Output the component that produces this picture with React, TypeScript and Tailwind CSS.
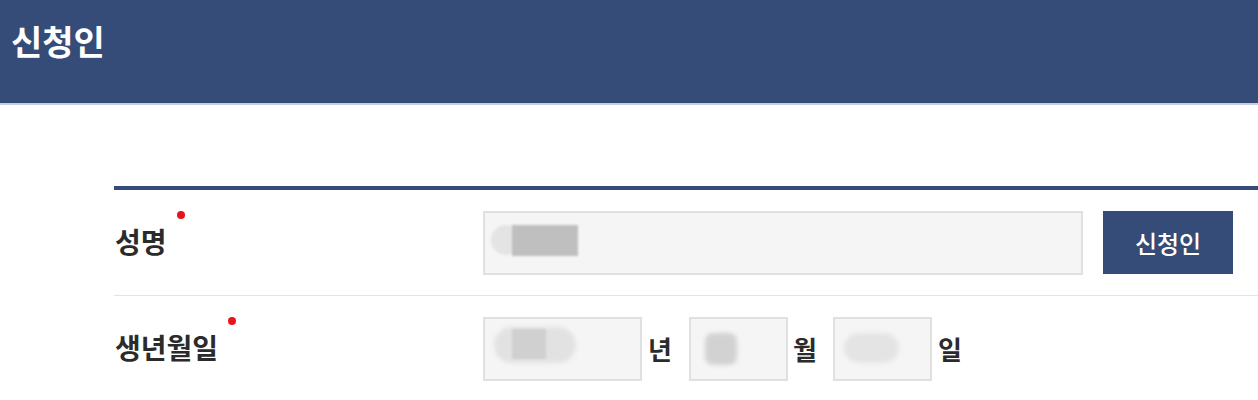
import React from "react";

const font = { fontFamily: '"Noto Sans CJK KR", "Noto Sans", sans-serif' };

function Dot() {
  return <span className="absolute -right-[18px] -top-[10px] w-[8px] h-[8px] rounded-full bg-[#e8141b]" />;
}

export default function App() {
  return (
    <div className="w-[1258px] h-[400px] bg-white overflow-hidden" style={font}>
      <header className="h-[105px] bg-[#344c77] border-b-2 border-[#c6cedd] pl-[11px] pt-[16px]">
        <h1 className="text-[34px] font-bold text-white leading-[50px]">신청인</h1>
      </header>

      <div className="ml-[114px] mt-[81px] border-t-[4px] border-[#344c77]">
        {/* Row 1 */}
        <div className="h-[106px] border-b border-[#e3e3e3] flex items-center">
          <div className="w-[369px] pl-[1px]">
            <span className="relative text-[28px] font-bold text-[#2b2b2b] leading-none">
              성명
              <Dot />
            </span>
          </div>
          <div className="relative w-[600px] h-[64px] bg-[#f5f5f5] border-2 border-[#e0e0e0] overflow-hidden">
            <div className="absolute left-[6px] top-[12px] w-[30px] h-[30px] rounded-full bg-[#e4e4e4] blur-[1px]" />
            <div className="absolute left-[27px] top-[12px] w-[66px] h-[31px] bg-[#bfbfbf] blur-[1px]" />
          </div>
          <button className="ml-[20px] w-[130px] h-[63px] bg-[#344c77] text-white text-[24px] font-medium">
            신청인
          </button>
        </div>

        {/* Row 2 */}
        <div className="h-[105px] flex items-center">
          <div className="w-[369px] pl-[1px]">
            <span className="relative text-[28px] font-bold text-[#2b2b2b] leading-none">
              생년월일
              <Dot />
            </span>
          </div>
          <div className="flex items-center">
            <div className="relative w-[159px] h-[64px] bg-[#f5f5f5] border-2 border-[#e0e0e0] overflow-hidden">
              <div className="absolute left-[9px] top-[8px] w-[82px] h-[36px] rounded-full bg-[#e2e2e2] blur-[2px]" />
              <div className="absolute left-[27px] top-[10px] w-[34px] h-[30px] bg-[#d0d0d0] blur-[1px]" />
            </div>
            <span className="w-[47px] pl-[6px] text-left text-[26px] font-bold text-[#2b2b2b]">년</span>
            <div className="relative w-[99px] h-[64px] bg-[#f5f5f5] border-2 border-[#e0e0e0] overflow-hidden">
              <div className="absolute left-[14px] top-[14px] w-[32px] h-[32px] rounded-[8px] bg-[#d2d2d2] blur-[2px]" />
            </div>
            <span className="w-[45px] pl-[5px] text-left text-[26px] font-bold text-[#2b2b2b]">월</span>
            <div className="relative w-[99px] h-[64px] bg-[#f5f5f5] border-2 border-[#e0e0e0] overflow-hidden">
              <div className="absolute left-[9px] top-[14px] w-[55px] h-[30px] rounded-full bg-[#e4e4e4] blur-[2px]" />
            </div>
            <span className="w-[40px] pl-[6px] text-left text-[26px] font-bold text-[#2b2b2b]">일</span>
          </div>
        </div>
      </div>
    </div>
  );
}
